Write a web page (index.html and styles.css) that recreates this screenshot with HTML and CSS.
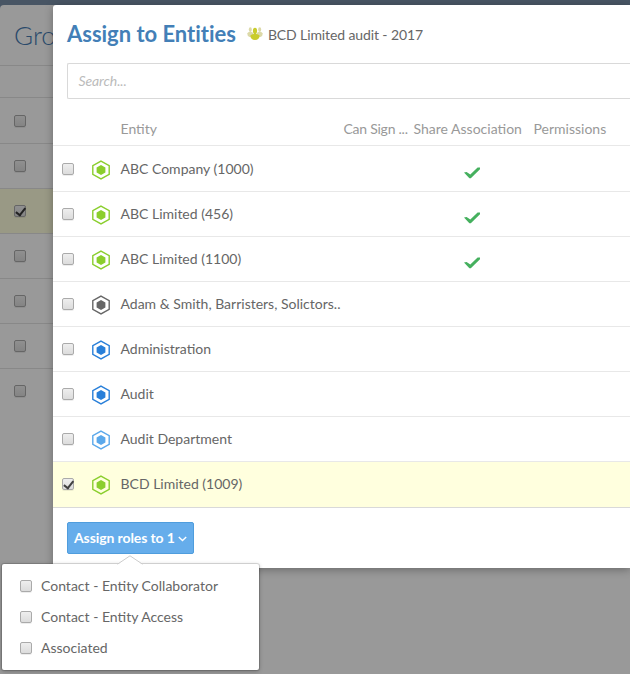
FILE: index.html
```html
<!DOCTYPE html>
<html lang="en">
<head>
<meta charset="utf-8">
<title>Assign to Entities</title>
<link rel="stylesheet" href="styles.css">
</head>
<body>
<svg width="0" height="0" class="defs">
  <symbol id="hex" viewBox="0 0 20 20"><path d="M10 1.1 18.2 5.6V14.4L10 18.9 1.8 14.4V5.6Z" fill="none" stroke="currentColor" stroke-width="1.4"/><path d="M10 5.1 14.4 7.5V12.5L10 14.9 5.6 12.5V7.5Z" fill="currentColor"/></symbol>
  <symbol id="tick" viewBox="0 0 16 12"><path d="M0 5.5 2.6 5 6.3 7.4 13.6 0.4H16V2.2L6.8 11.2H5.4Z" fill="#45b05e"/></symbol>
</svg>
<div class="topbar"></div>
<div class="page">
  <h2 class="page-title">Gro</h2>
  <div class="page-head"></div>
  <div class="page-row"><span class="box"></span></div>
  <div class="page-row"><span class="box"></span></div>
  <div class="page-row selected"><span class="box checked"></span></div>
  <div class="page-row"><span class="box"></span></div>
  <div class="page-row"><span class="box"></span></div>
  <div class="page-row"><span class="box"></span></div>
  <div class="page-row last"><span class="box"></span></div>
</div>
<div class="modal">
  <header class="modal-head">
    <h1>Assign to Entities</h1>
    <svg class="people" viewBox="0 0 16 14"><g fill="#dcd9a8"><ellipse cx="3.3" cy="2.6" rx="1.5" ry="2.4"/><ellipse cx="12.7" cy="2.6" rx="1.5" ry="2.4"/><path d="M.2 6.2Q3.300 3.600 6.200 6V10H2.600Q.2 9.300 .2 6.200ZM15.800 6.200Q12.700 3.600 9.800 6V10H13.400Q15.800 9.300 15.800 6.200Z"/></g><ellipse cx="8" cy="3.700" rx="2.100" ry="2.900" fill="#c9cc2c"/><path d="M3.400 8.600Q4.800 6.900 6.800 7V5.500H9.200V7Q11.200 6.900 12.600 8.600 12.500 13 8 13 3.500 13 3.400 8.600Z" fill="#c9cc2c"/></svg>
    <span class="subject">BCD Limited audit - 2017</span>
  </header>
  <div class="search">Search...</div>
  <div class="cols"><span></span><span></span><span>Entity</span><span class="sign">Can Sign ...</span><span>Share Association</span><span>Permissions</span></div>
  <div class="row"><span class="box"></span><svg class="hex green"><use href="#hex"/></svg><span class="name">ABC Company (1000)</span><svg class="tick"><use href="#tick"/></svg></div>
  <div class="row"><span class="box"></span><svg class="hex green"><use href="#hex"/></svg><span class="name">ABC Limited (456)</span><svg class="tick"><use href="#tick"/></svg></div>
  <div class="row"><span class="box"></span><svg class="hex green"><use href="#hex"/></svg><span class="name">ABC Limited (1100)</span><svg class="tick"><use href="#tick"/></svg></div>
  <div class="row"><span class="box"></span><svg class="hex gray"><use href="#hex"/></svg><span class="name">Adam &amp; Smith, Barristers, Solictors..</span></div>
  <div class="row"><span class="box"></span><svg class="hex blue"><use href="#hex"/></svg><span class="name">Administration</span></div>
  <div class="row"><span class="box"></span><svg class="hex blue"><use href="#hex"/></svg><span class="name">Audit</span></div>
  <div class="row"><span class="box"></span><svg class="hex sky"><use href="#hex"/></svg><span class="name">Audit Department</span></div>
  <div class="row active"><span class="box checked"></span><svg class="hex green"><use href="#hex"/></svg><span class="name">BCD Limited (1009)</span></div>
  <footer class="foot"><button class="assign" type="button"><span>Assign roles to 1</span><svg width="9" height="6" viewBox="0 0 9 6"><path d="M.8 1 4.500 4.500 8.200 1" fill="none" stroke="#fff" stroke-width="1.400"/></svg></button></footer>
</div>
<div class="menu">
  <svg class="arrow" viewBox="0 0 26 10"><path d="M0 10 13 .8 26 10Z" fill="#fff"/><path d="M.5 9.200 13 .8 25.500 9.200" fill="none" stroke="#ccc"/></svg>
  <div class="option"><span class="box"></span><span>Contact - Entity Collaborator</span></div>
  <div class="option"><span class="box"></span><span>Contact - Entity Access</span></div>
  <div class="option"><span class="box"></span><span>Associated</span></div>
</div>
</body>
</html>
```
FILE: styles.css
```css
* { box-sizing: border-box; }
body {
  margin: 0;
  width: 630px;
  height: 674px;
  position: relative;
  overflow: hidden;
  background: #485564;
  font: 14px/20px Lato, "Liberation Sans", sans-serif;
  color: #666;
}
.defs { position: absolute; }
.topbar { height: 5px; background: #485564; }
.page { height: 669px; background: #999; border-radius: 4px 0 0 0; }
.page-title {
  margin: 0;
  width: 53px;
  height: 61px;
  padding-left: 14px;
  overflow: hidden;
  border-bottom: 1px solid #888;
  font-size: 26px;
  font-weight: 300;
  line-height: 60px;
  color: #2a4a6b;
}
.page-head { height: 32px; border-bottom: 1px solid #888; }
.page-row {
  height: 45px;
  padding: 0 0 0 14px;
  display: flex;
  align-items: center;
  border-bottom: 1px solid #888;
}
.page-head + .page-row { height: 46px; padding-top: 1px; }
.page-row.selected { background: #999985; }
.page-row.last { border-color: transparent; }
.box {
  flex: none;
  width: 12px;
  height: 12px;
  border: 1px solid #aaa;
  border-radius: 2px;
  background: linear-gradient(#eee, #dcdcdc);
  box-shadow: 0 1px 0 rgba(0, 0, 0, .07);
}
.page .box { border-color: #666; background: linear-gradient(#909090, #848484); }
.box.checked { position: relative; }
.box.checked::after {
  content: "";
  position: absolute;
  left: 3px;
  top: 0;
  width: 4px;
  height: 8px;
  border: solid #404040;
  border-width: 0 2px 2px 0;
  transform: translate(-.3px, -.2px) rotate(38deg);
}
.page .box.checked::after { border-color: #222; }
.modal {
  position: absolute;
  left: 53px;
  top: 5px;
  width: 577px;
  height: 563px;
  background: #fff;
  border-radius: 3px 0 0 3px;
  box-shadow: 0 2px 8px rgba(0, 0, 0, .3);
}
.modal-head { height: 58px; padding-left: 14px; display: flex; align-items: center; }
h1 { margin: 0; font-size: 22px; line-height: 58px; letter-spacing: -.02px; color: #437fb7; white-space: nowrap; }
.people { flex: none; width: 16px; height: 14px; margin: 0 5px 0 11px; }
.subject { padding-top: 2px; letter-spacing: -.11px; white-space: nowrap; }
.search {
  height: 36px;
  margin: 0 0 0 14px;
  padding-left: 10.5px;
  border: 1px solid #d9d9d9;
  border-right: 0;
  border-radius: 2px 0 0 2px;
  line-height: 34px;
  font-style: italic;
  letter-spacing: -.1px;
  color: #bbb;
}
.cols, .row {
  display: grid;
  grid-template-columns: 29px 29.5px 223px 70px 120px 1fr;
  padding-left: 9px;
  border-bottom: 1px solid #e8e8e8;
}
.cols { height: 47px; line-height: 60px; color: #999; white-space: nowrap; }
.cols .sign { letter-spacing: -.25px; }
.row { height: 45px; align-items: center; }
.cols + .row { height: 46px; padding-top: 1px; }
.row.active { height: 46px; padding-bottom: 1px; background: #ffffde; border-color: #d9d9d9; }
.hex { width: 20px; height: 20px; margin-top: 2px; }
.green { color: #8ace2d; }
.gray { color: #666; }
.blue { color: #287fd9; }
.sky { color: #5aa8eb; }
.name { white-space: nowrap; }
.tick { grid-column: 5; width: 16px; height: 12px; margin: 7px 0 0 50.5px; }
.foot { padding: 14px; }
.assign {
  display: flex;
  align-items: center;
  gap: 3px;
  width: 127px;
  height: 32px;
  padding: 0 6px;
  border: 1px solid #4f9ddd;
  border-radius: 2px;
  background: #66adeb;
  color: #fff;
  font: bold 14px/20px Lato, sans-serif;
  letter-spacing: -.1px;
  white-space: nowrap;
}
.assign svg { flex: none; margin-top: 2px; }
.menu {
  position: absolute;
  left: 2px;
  top: 564px;
  width: 257px;
  height: 106px;
  padding: 6px 18px;
  background: #fff;
  border-radius: 2px;
  box-shadow: 0 0 0 1px rgba(0, 0, 0, .12), 0 1px 4px rgba(0, 0, 0, .3);
}
.arrow { position: absolute; left: 115px; top: -9px; width: 26px; height: 10px; }
.option { height: 31px; display: flex; align-items: center; gap: 9px; }
```
